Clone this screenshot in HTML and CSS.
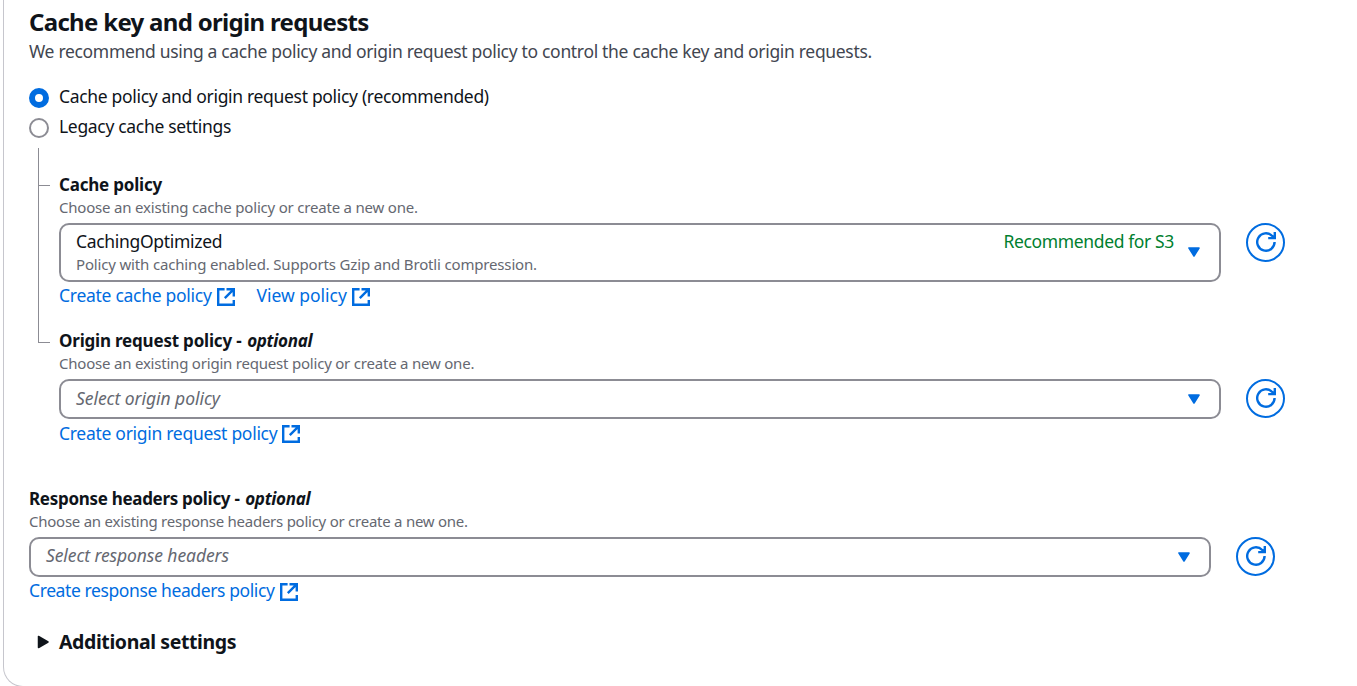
FILE: index.html
```html
<!DOCTYPE html>
<html lang="en">
<head>
<meta charset="utf-8">
<title>Cache key and origin requests</title>
<link rel="stylesheet" href="styles.css">
</head>
<body>
<svg class="sprite" aria-hidden="true">
  <symbol id="external" viewBox="0 0 18 18"><path d="M7.6 1.2H1.2v15.6h15.6V12M9.5 1.2h7.3v7.3M16.8 1.2 7.8 10.2" fill="none" stroke="currentColor" stroke-width="2.4"/></symbol>
  <symbol id="refresh" viewBox="0 0 20 20"><path d="M18.6 10a8.7 8.7 0 1 1-2.4-6l2.6 2.4M18.8 0v6.1h-6.6" fill="none" stroke="currentColor" stroke-width="2.4"/></symbol>
  <symbol id="caret" viewBox="0 0 12 10"><path d="M1 1h10L6 9z" fill="currentColor" stroke="currentColor" stroke-width="1.6" stroke-linejoin="round"/></symbol>
</svg>
<main class="card">
  <h2 class="title">Cache key and origin requests</h2>
  <p class="description">We recommend using a cache policy and origin request policy to control the cache key and origin requests.</p>
  <div class="radios">
    <label class="radio"><span class="dot dot-on"></span><span>Cache policy and origin request policy (recommended)</span></label>
    <label class="radio"><span class="dot"></span><span>Legacy cache settings</span></label>
  </div>
  <div class="tree">
    <div class="rail"><div class="branch branch-top"></div><div class="branch branch-bottom"></div></div>
    <div class="fields">
      <section class="field cache">
        <h3 class="label">Cache policy</h3>
        <p class="hint">Choose an existing cache policy or create a new one.</p>
        <div class="control">
          <div class="select select-tall">
            <div class="value"><div class="option">CachingOptimized</div><div class="detail">Policy with caching enabled. Supports Gzip and Brotli compression.</div></div>
            <div class="tag">Recommended for S3</div>
            <svg class="caret"><use href="#caret"/></svg>
          </div>
          <button class="refresh" aria-label="Refresh"><svg><use href="#refresh"/></svg></button>
        </div>
        <div class="links">
          <a class="link"><span>Create cache policy</span><svg><use href="#external"/></svg></a>
          <a class="link link-view"><span>View policy</span><svg><use href="#external"/></svg></a>
        </div>
      </section>
      <section class="field origin">
        <h3 class="label">Origin request policy <span class="dash">-</span> <i>optional</i></h3>
        <p class="hint">Choose an existing origin request policy or create a new one.</p>
        <div class="control">
          <div class="select"><div class="value placeholder">Select origin policy</div><svg class="caret"><use href="#caret"/></svg></div>
          <button class="refresh" aria-label="Refresh"><svg><use href="#refresh"/></svg></button>
        </div>
        <div class="links"><a class="link"><span>Create origin request policy</span><svg><use href="#external"/></svg></a></div>
      </section>
    </div>
  </div>
  <section class="field response">
    <h3 class="label">Response headers policy <span class="dash">-</span> <i>optional</i></h3>
    <p class="hint">Choose an existing response headers policy or create a new one.</p>
    <div class="control">
      <div class="select"><div class="value placeholder">Select response headers</div><svg class="caret"><use href="#caret"/></svg></div>
      <button class="refresh" aria-label="Refresh"><svg><use href="#refresh"/></svg></button>
    </div>
    <div class="links"><a class="link"><span>Create response headers policy</span><svg><use href="#external"/></svg></a></div>
  </section>
  <div class="additional"><svg class="expand" viewBox="0 0 12 14"><path d="M1.5 1.5v11L11 7z" fill="currentColor" stroke="currentColor" stroke-width="1.5" stroke-linejoin="round"/></svg><span>Additional settings</span></div>
</main>
</body>
</html>
```

FILE: styles.css
```css
* { box-sizing: border-box; }
html { overflow: hidden; }
body { margin: 0; height: 686px; overflow: hidden; background: #fff; color: #0f141a; font: 17.5px/25px "Noto Sans", "Open Sans", sans-serif; white-space: nowrap; }
h2, h3, p { margin: 0; }
.sprite { display: none; }
.card { margin-left: 3px; width: 1400px; height: 687px; padding: 7px 0 0 25px; border: 1px solid #c6c6cd; border-top: 0; border-radius: 0 0 0 20px; }
.title { font-size: 24px; line-height: 30px; font-weight: 700; letter-spacing: -.69px; }
.description { margin-top: 2px; color: #424650; letter-spacing: -.32px; }
.radios { display: flex; flex-direction: column; gap: 5px; margin-top: 20px; letter-spacing: -.32px; }
.radio { display: flex; gap: 10px; }
.dot { width: 20px; height: 20px; margin-top: 4px; border: 2px solid #8c8c94; border-radius: 50%; }
.dot-on { border: 6px solid #006ce0; }
.tree { display: flex; margin-top: 9px; height: 298px; }
.rail { width: 21px; height: 195px; margin-left: 9px; }
.branch { width: 12px; border-left: 1px solid #8c8c94; border-bottom: 1px solid #8c8c94; }
.branch-top { height: 38px; }
.branch-bottom { height: 157px; }
.fields { display: flex; flex-direction: column; gap: 19px; padding-top: 24px; }
.label { font-size: 17px; line-height: 25px; font-weight: 700; letter-spacing: -.2px; }
.response .label { letter-spacing: -.3px; }
.label .dash { margin-right: 1.5px; }
.label i { letter-spacing: -.3px; }
.hint { line-height: 20px; font-size: 15px; color: #656871; letter-spacing: -.2px; }
.origin .hint { letter-spacing: -.21px; }
.response .hint { letter-spacing: -.25px; }
.control { display: flex; gap: 25px; margin-top: 6px; }
.select { display: flex; align-items: center; width: 1162px; height: 40px; padding: 0 19px 0 15px; border: 2px solid #8c8c94; border-radius: 10px; }
.response .select { width: 1182px; }
.select-tall { height: 59px; }
.value { flex: 1; padding-bottom: 2px; }
.option { line-height: 25px; letter-spacing: -.31px; }
.detail { line-height: 20px; font-size: 15px; color: #656871; letter-spacing: -.165px; }
.tag { align-self: flex-start; margin: 4px 14px 0 0; color: #00802f; letter-spacing: -.37px; }
.placeholder { color: #656871; font-style: italic; letter-spacing: -.1px; }
.origin .placeholder { padding-bottom: 1px; letter-spacing: -.05px; }
.response .placeholder { padding-bottom: 3px; }
.caret { width: 12px; height: 10px; color: #006ce0; }
.select-tall .caret { margin-bottom: 1px; }
.refresh { display: flex; align-items: center; justify-content: center; width: 39px; height: 39px; padding: 0; border: 2px solid #006ce0; border-radius: 50%; background: #fff; color: #006ce0; }
.refresh svg { width: 20px; height: 20px; margin-bottom: 1px; }
.links { display: flex; gap: 22px; height: 26px; margin-top: 1px; color: #006ce0; }
.link { display: flex; gap: 5px; letter-spacing: -.28px; }
.link svg { width: 18px; height: 18px; margin-top: 5px; }
.link-view { letter-spacing: -.03px; }
.origin .links { padding-top: 1px; }
.origin .link { letter-spacing: -.29px; }
.origin .link svg { margin-top: 4px; }
.response .link { letter-spacing: -.4px; gap: 6px; }
.response { margin-top: 40px; }
.additional { display: flex; align-items: center; gap: 10px; margin: 23px 0 0 8px; font-size: 19.5px; line-height: 30px; font-weight: 700; letter-spacing: -.4px; }
.expand { width: 12px; height: 14px; }
```
